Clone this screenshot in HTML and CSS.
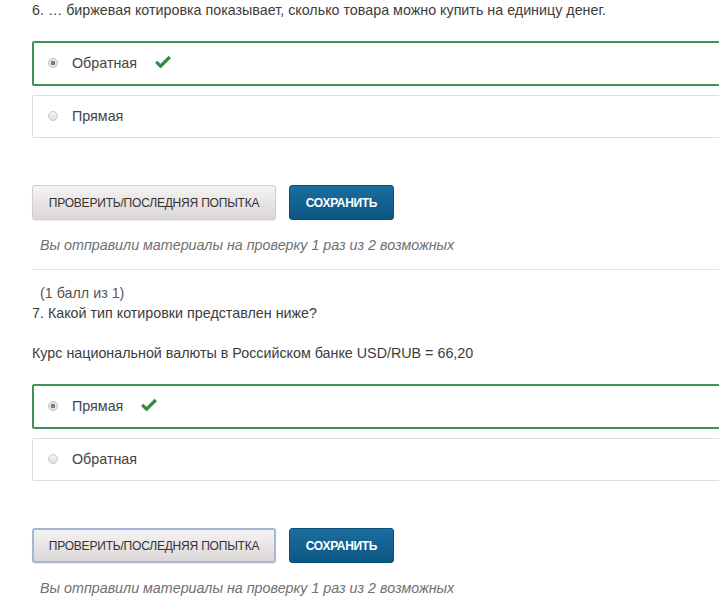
FILE: index.html
```html
<!DOCTYPE html>
<html lang="ru">
<head>
<meta charset="utf-8">
<title>Проблема</title>
<link rel="stylesheet" href="styles.css">
</head>
<body>
<div class="page">
  <section class="problem">
    <p class="question">6. … биржевая котировка показывает, сколько товара можно купить на единицу денег.</p>
    <div class="choices">
      <label class="choice correct">
        <span class="radio checked"></span>
        <span class="choice-text">Обратная</span>
        <svg class="check" width="16" height="13" viewBox="0 0 16 13"><path d="M1.2 6.8 L5.6 11.2 L14.8 2" fill="none" stroke="#2f8c47" stroke-width="3.2" stroke-linejoin="miter"/></svg>
      </label>
      <label class="choice">
        <span class="radio"></span>
        <span class="choice-text">Прямая</span>
      </label>
    </div>
    <div class="actions">
      <button class="btn btn-check">ПРОВЕРИТЬ/ПОСЛЕДНЯЯ ПОПЫТКА</button>
      <button class="btn btn-save">СОХРАНИТЬ</button>
    </div>
    <p class="submission">Вы отправили материалы на проверку 1 раз из 2 возможных</p>
  </section>
  <div class="separator"></div>
  <section class="problem">
    <p class="score">(1 балл из 1)</p>
    <p class="question">7. Какой тип котировки представлен ниже?</p>
    <p class="question gap">Курс национальной валюты в Российском банке USD/RUB = 66,20</p>
    <div class="choices">
      <label class="choice correct">
        <span class="radio checked"></span>
        <span class="choice-text">Прямая</span>
        <svg class="check" width="16" height="13" viewBox="0 0 16 13"><path d="M1.2 6.8 L5.6 11.2 L14.8 2" fill="none" stroke="#2f8c47" stroke-width="3.2" stroke-linejoin="miter"/></svg>
      </label>
      <label class="choice">
        <span class="radio"></span>
        <span class="choice-text">Обратная</span>
      </label>
    </div>
    <div class="actions">
      <button class="btn btn-check focused">ПРОВЕРИТЬ/ПОСЛЕДНЯЯ ПОПЫТКА</button>
      <button class="btn btn-save">СОХРАНИТЬ</button>
    </div>
    <p class="submission">Вы отправили материалы на проверку 1 раз из 2 возможных</p>
  </section>
</div>
</body>
</html>
```
FILE: styles.css
```css
html, body {
  margin: 0;
  padding: 0;
  background: #fff;
  overflow: hidden;
}
body {
  font-family: "Liberation Sans", Arial, sans-serif;
  font-size: 14.3px;
  color: #3c3c3c;
}
.page {
  padding-left: 32px;
  width: 760px;
}
.problem p {
  margin: 0;
  line-height: 20px;
}
.question {
  color: #3c3c3c;
}
.question.gap {
  margin-top: 20px !important;
}
.score {
  padding-left: 8px;
  color: #555;
}
.choices {
  margin-top: 21px;
  display: flex;
  flex-direction: column;
  gap: 9px;
}
.choice {
  display: flex;
  align-items: center;
  border: 1px solid #dcdcdc;
  border-radius: 2px;
  padding: 10px 0 10px 15px;
  line-height: 21px;
  color: #444;
}
.choice.correct {
  border: 2px solid #43905a;
  padding-left: 14px;
}
.radio {
  width: 10px;
  height: 10px;
  border-radius: 50%;
  border: 1px solid #c8c8c8;
  background: linear-gradient(#f4f4f4, #dedede);
  box-sizing: border-box;
  margin-right: 14px;
  position: relative;
  top: -1px;
}
.radio.checked {
  background: radial-gradient(circle, #7a7a7a 0 2px, #e6e6e6 2.6px);
  border-color: #bdbdbd;
}
.check {
  margin-left: 18px;
  position: relative;
  top: -2px;
}
.actions {
  margin-top: 47px;
  display: flex;
  gap: 13px;
}
.btn {
  height: 35px;
  border-radius: 3px;
  font-family: "Liberation Sans", Arial, sans-serif;
  font-size: 12px;
  cursor: pointer;
  padding: 0;
}
.btn-check {
  width: 244px;
  border: 1px solid #d2cece;
  background: linear-gradient(#f5f3f3, #dcd7d7);
  color: #333;
  letter-spacing: -0.2px;
  box-shadow: 0 1px 1px rgba(0,0,0,0.08);
}
.btn-check.focused {
  border: 2px solid #a5b6d6;
}
.btn-save {
  width: 105px;
  border: 1px solid #0b4f78;
  background: linear-gradient(#1a6e9e, #0c5683);
  color: #fff;
  font-weight: bold;
  letter-spacing: -0.3px;
}
.submission {
  margin-top: 15px !important;
  padding-left: 8px;
  font-style: italic;
  color: #707070;
}
.separator {
  height: 1px;
  background: #e2e2e2;
  margin-top: 14px;
  margin-bottom: 13px;
}
```
